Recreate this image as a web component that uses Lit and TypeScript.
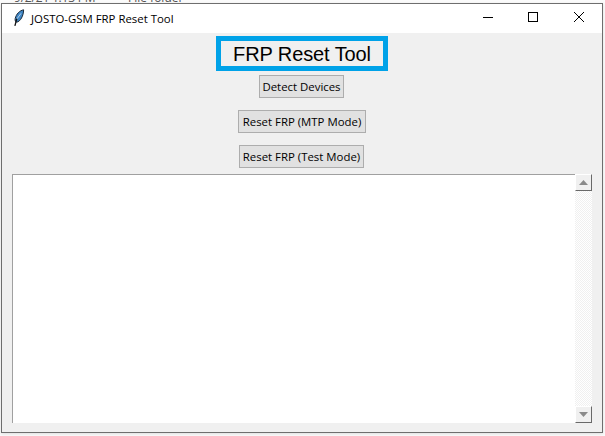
import { LitElement, html, css } from "lit";
import { customElement } from "lit/decorators.js";

@customElement("app-root")
export class AppRoot extends LitElement {
  static styles = css`
    :host { display: block; width: 605px; height: 436px; background: #fbfbfb; overflow: hidden; position: relative; font-family: "Open Sans", "Noto Sans", sans-serif; }
    .behind { position: absolute; top: -11px; left: 0; height: 14px; font: 12px "Open Sans", sans-serif; color: #555; }
    .behind span { position: absolute; top: 0; white-space: nowrap; }
    .b-date { left: 14px; letter-spacing: -0.2px; }
    .b-type { left: 128px; }
    .window { position: absolute; left: 1px; top: 3px; width: 602px; height: 430px; border: 1px solid #6e6e6e; box-sizing: border-box; display: flex; flex-direction: column; background: #f0f0f0; box-shadow: 0 1px 3px rgba(0,0,0,0.12); }
    .titlebar { height: 29px; flex: none; background: #fff; display: flex; align-items: center; padding-left: 10px; }
    .feather { width: 14px; height: 18px; flex: none; margin-right: 5px; margin-top: -1px; }
    .title { font: 11.4px "Open Sans", "Noto Sans", sans-serif; color: #000; flex: 1; white-space: nowrap; }
    .ctl { width: 46px; height: 29px; box-sizing: border-box; padding: 8px 0 0 18px; flex: none; }
    .ctl.min { width: 45px; }
    .ctl svg { width: 10px; height: 10px; display: block; }
    .content { flex: 1; min-height: 0; display: flex; flex-direction: column; align-items: center; }
    .heading { margin-top: 3px; height: 35px; width: 172px; box-sizing: border-box; border: 5px solid #00a2e8; display: flex; align-items: center; justify-content: center; font: 20px "Liberation Sans", sans-serif; letter-spacing: -0.1px; color: #000; background: #f0f0f0; padding-top: 1px; }
    .btn { box-sizing: border-box; height: 23px; border: 1px solid #adadad; background: #e1e1e1; display: flex; align-items: center; justify-content: center; font: 11.4px "Open Sans", "Noto Sans", sans-serif; color: #000; padding: 0; white-space: nowrap; }
    .b1 { width: 85px; margin-top: 4px; margin-right: 1px; }
    .b2 { width: 128px; margin-top: 12px; }
    .b3 { width: 125px; margin-top: 12px; margin-right: 1px; }
    .textwrap { align-self: stretch; flex: 1; min-height: 0; margin: 6px 10px 9px 10px; display: flex; }
    .text { flex: 1; background: #fff; border-top: 1px solid #a0a0a0; border-left: 1px solid #a0a0a0; }
    .scroll { width: 17px; flex: none; display: flex; flex-direction: column; background-color: #fff; background-image: repeating-conic-gradient(#f0f0f0 0 25%, #fff 0 50%); background-size: 2px 2px; }
    .track { flex: 1; }
    .arrow { box-sizing: border-box; width: 17px; height: 17px; background: #f0f0f0; border: 1px solid; border-color: #fff #696969 #696969 #fff; display: flex; align-items: center; justify-content: center; }
    .arrow svg { width: 9px; height: 5px; display: block; }
  `;

  render() {
    return html`
      <div class="behind"><span class="b-date">9/2/21 1:13 PM</span><span class="b-type">File folder</span></div>
      <div class="window">
        <div class="titlebar">
          <svg class="feather" viewBox="0 0 14 18">
            <path d="M11.6 0.8 C7.6 1.6 4.2 5 3.2 9.6 C2.9 11.4 3.4 13 4.6 13.2 C8.4 12.6 11.6 6.8 11.6 0.8 Z" fill="#3f86c6" stroke="#1a2a3a" stroke-width="1"/>
            <path d="M9 4.4 L4.6 10.4" fill="none" stroke="#cfe4f5" stroke-width="0.8"/>
            <path d="M4.8 9.6 L2.9 16.8" fill="none" stroke="#111" stroke-width="1.3"/>
          </svg>
          <div class="title">JOSTO-GSM FRP Reset Tool</div>
          <div class="ctl min"><svg viewBox="0 0 10 10"><path d="M0 5.5 H10" stroke="#000" fill="none"/></svg></div>
          <div class="ctl"><svg viewBox="0 0 10 10"><rect x="0.5" y="0.5" width="9" height="9" stroke="#000" fill="none"/></svg></div>
          <div class="ctl"><svg viewBox="0 0 10 10"><path d="M0 0 L10 10 M10 0 L0 10" stroke="#000" fill="none"/></svg></div>
        </div>
        <div class="content">
          <div class="heading">FRP Reset Tool</div>
          <div class="btn b1">Detect Devices</div>
          <div class="btn b2">Reset FRP (MTP Mode)</div>
          <div class="btn b3">Reset FRP (Test Mode)</div>
          <div class="textwrap">
            <div class="text"></div>
            <div class="scroll">
              <div class="arrow"><svg viewBox="0 0 9 5"><path d="M4.5 0 L9 5 H0 Z" fill="#8a8a8a"/></svg></div>
              <div class="track"></div>
              <div class="arrow"><svg viewBox="0 0 9 5"><path d="M0 0 H9 L4.5 5 Z" fill="#8a8a8a"/></svg></div>
            </div>
          </div>
        </div>
      </div>
    `;
  }
}
